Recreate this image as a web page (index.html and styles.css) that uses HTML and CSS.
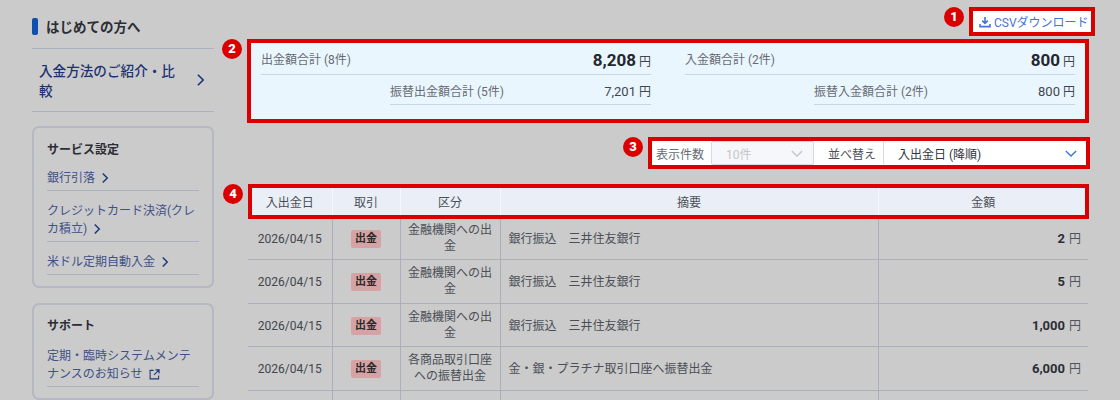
FILE: index.html
```html
<!DOCTYPE html>
<html lang="ja">
<head>
  <meta charset="UTF-8" />
  <title>入出金履歴</title>
  <link rel="stylesheet" href="styles.css">
</head>
<body>
  <div class="page">

    <!-- sidebar -->
    <aside class="side">
      <div class="side-head"><span class="marker"></span>はじめての方へ</div>
      <a class="side-main">
        <span>入金方法のご紹介・比較</span>
        <svg class="chev-lg" viewBox="0 0 10 16"><path d="M2 2l6 6-6 6"/></svg>
      </a>

      <div class="card first">
        <div class="card-title">サービス設定</div>
        <a class="card-link">銀行引落<svg class="chev" viewBox="0 0 10 16"><path d="M2 2l6 6-6 6"/></svg></a>
        <a class="card-link">クレジットカード決済(クレカ積立)<svg class="chev" viewBox="0 0 10 16"><path d="M2 2l6 6-6 6"/></svg></a>
        <a class="card-link">米ドル定期自動入金<svg class="chev" viewBox="0 0 10 16"><path d="M2 2l6 6-6 6"/></svg></a>
      </div>

      <div class="card">
        <div class="card-title">サポート</div>
        <a class="card-link">定期・臨時システムメンテナンスのお知らせ<svg class="ext" viewBox="0 0 12 12"><path d="M5 1.5H1.2v9.3h9.3V7M7 1h4v4M11 1L5.5 6.5"/></svg></a>
      </div>
    </aside>

    <main class="main">

      <!-- csv -->
      <div class="csv-row">
        <div class="spot csv">
          <span class="num">1</span>
          <svg class="dl" viewBox="0 0 12 12"><path d="M6 1v6M3.2 4.6L6 7.4l2.8-2.8M1 8v2.6h10V8"/></svg>
          CSVダウンロード
        </div>
      </div>

      <!-- totals -->
      <div class="spot totals">
        <span class="num">2</span>
        <div class="total-col">
          <div class="total-row">
            <span>出金額合計 (8件)</span>
            <span class="big">8,208<small>円</small></span>
          </div>
          <div class="total-row sub">
            <span>振替出金額合計 (5件)</span>
            <span class="val">7,201<small>円</small></span>
          </div>
        </div>
        <div class="total-col">
          <div class="total-row">
            <span>入金額合計 (2件)</span>
            <span class="big">800<small>円</small></span>
          </div>
          <div class="total-row sub">
            <span>振替入金額合計 (2件)</span>
            <span class="val">800<small>円</small></span>
          </div>
        </div>
      </div>

      <!-- controls -->
      <div class="ctrl-row">
        <div class="spot ctrl">
          <span class="num">3</span>
          <span class="ctrl-label">表示件数</span>
          <div class="sel off">10件<svg viewBox="0 0 14 8"><path d="M1 1l6 6 6-6"/></svg></div>
          <span class="ctrl-label dark">並べ替え</span>
          <div class="sel wide">入出金日 (降順)<svg viewBox="0 0 14 8"><path d="M1 1l6 6 6-6"/></svg></div>
        </div>
      </div>

      <!-- history -->
      <div class="table-wrap">
        <div class="spot head-frame"><span class="num">4</span></div>
        <table class="hist">
          <colgroup>
            <col class="c-date"><col class="c-kind"><col class="c-cat"><col class="c-memo"><col>
          </colgroup>
          <thead>
            <tr><th>入出金日</th><th>取引</th><th>区分</th><th>摘要</th><th>金額</th></tr>
          </thead>
          <tbody>
            <tr>
              <td class="ctr">2026/04/15</td>
              <td class="ctr"><span class="pill">出金</span></td>
              <td class="ctr cat">金融機関への出金</td>
              <td>銀行振込　三井住友銀行</td>
              <td class="amt"><b>2</b><small>円</small></td>
            </tr>
            <tr>
              <td class="ctr">2026/04/15</td>
              <td class="ctr"><span class="pill">出金</span></td>
              <td class="ctr cat">金融機関への出金</td>
              <td>銀行振込　三井住友銀行</td>
              <td class="amt"><b>5</b><small>円</small></td>
            </tr>
            <tr>
              <td class="ctr">2026/04/15</td>
              <td class="ctr"><span class="pill">出金</span></td>
              <td class="ctr cat">金融機関への出金</td>
              <td>銀行振込　三井住友銀行</td>
              <td class="amt"><b>1,000</b><small>円</small></td>
            </tr>
            <tr>
              <td class="ctr">2026/04/15</td>
              <td class="ctr"><span class="pill">出金</span></td>
              <td class="ctr cat">各商品取引口座への振替出金</td>
              <td>金・銀・プラチナ取引口座へ振替出金</td>
              <td class="amt"><b>6,000</b><small>円</small></td>
            </tr>
            <!-- next row starts at the fold, its text is below the window -->
            <tr><td></td><td></td><td></td><td></td><td></td></tr>
          </tbody>
        </table>
      </div>
    </main>
  </div>
</body>
</html>
```
FILE: styles.css
```css
*{box-sizing:border-box}
html,body{height:400px;overflow:hidden}
body{
  margin:0;
  font-family:Roboto,"Noto Sans CJK JP",sans-serif;
  font-size:12px;
  background:#cbcbcb;
  color:#3b3f46;
}
.page{display:flex;align-items:flex-start;padding:0 32px}

/* sidebar */
.side{width:182px;flex-shrink:0;margin-right:34px}
.side-head{
  display:flex;
  align-items:center;
  gap:8px;
  height:49px;
  padding-top:4px;
  font-size:13.5px;
  font-weight:700;
  color:#2b2e35;
  border-bottom:1.5px solid #acb2bf;
}
.marker{width:6px;height:17px;background:#0f4fb0;border-radius:2px}
.side-main{
  display:flex;
  align-items:center;
  justify-content:space-between;
  height:63px;
  padding:0 9px 0 7px;
  font-size:13.6px;
  line-height:20px;
  font-weight:500;
  color:#1d3272;
  border-bottom:1.5px solid #acb2bf;
}
.side-main span{width:146px;padding-top:2px}
.chev-lg{width:9px;height:14px;flex-shrink:0}
.chev-lg path,.chev path{fill:none;stroke:#1d3a7a;stroke-width:2}

.card{
  margin-top:15px;
  padding:12px 13px 11px;
  border:2px solid #b3b8c4;
  border-radius:7px;
}
.card.first{margin-top:14px}
.card + .card{padding-top:11px}
.card-title{
  font-size:12px;
  font-weight:700;
  line-height:20px;
  color:#2b2e35;
  margin-bottom:5px;
}
.card + .card .card-title{margin-bottom:7px}
.card-link{
  display:block;
  padding:4px 0 3px;
  line-height:18px;
  color:#3f5187;
  border-bottom:1.5px solid #acb2bf;
}
.card-link + .card-link{margin-top:7px}
.chev{width:8px;height:12px;margin-left:6px;vertical-align:-2px}
.ext{width:11px;height:11px;margin-left:6px;vertical-align:-2px}
.ext path{fill:none;stroke:#1d3a7a;stroke-width:1.2}

/* highlighted parts */
.main{width:840px;flex-shrink:0}
.spot{position:relative;border:4px solid #da0000}
.num{
  position:absolute;
  left:-29px;
  top:-4px;
  width:20px;
  height:20px;
  border-radius:50%;
  background:#da0000;
  color:#fff;
  font-size:13px;
  font-weight:900;
  line-height:20px;
  text-align:center;
}

.csv-row{display:flex;justify-content:flex-end;padding-top:7px;margin-right:-7px}
.csv{
  display:flex;
  align-items:center;
  width:126px;
  height:29px;
  padding-left:6px;
  background:#fff;
  font-size:12px;
  white-space:nowrap;
  color:#4673d6;
}
.dl{width:12px;height:12px;margin-right:3px;flex-shrink:0}
.dl path{fill:none;stroke:#4673d6;stroke-width:1.6}

.totals{
  display:flex;
  gap:34px;
  width:842px;
  height:84px;
  margin:3px 0 0 -1px;
  padding:0 10px;
  background:#eaf6fe;
  color:#666b73;
}
.total-col{flex:1}
.total-row{
  display:flex;
  align-items:center;
  justify-content:space-between;
  height:32px;
  border-bottom:1px solid #cbd5e3;
}
.total-row.sub{height:30px;margin-left:129px;padding-top:1px}
.big{font-size:17px;font-weight:700;color:#24272d;padding-top:3px}
.val{font-size:13px;color:#42464d}
.total-row small{font-size:12px;font-weight:400;color:#42464d;margin-left:3px}

.ctrl-row{display:flex;justify-content:flex-end;margin:14px -2px 0 0}
.ctrl{
  display:flex;
  align-items:center;
  width:442px;
  height:32px;
  background:#fff;
  padding-left:4px;
}
.ctrl-label{width:55px;flex-shrink:0;color:#666b73}
.ctrl-label.dark{color:#4b4f56;width:55px;margin-left:14px}
.sel{
  display:flex;
  align-items:center;
  justify-content:space-between;
  height:24px;
  border:1px solid #d5d9e1;
  border-radius:2px;
  padding:0 10px 0 14px;
  color:#30343b;
}
.sel svg{width:12px;height:7px}
.sel path{fill:none;stroke:#3f76d8;stroke-width:1.6}
.sel.off{width:103px;background:#f6f7fa;color:#c3c6cc}
.sel.off path{stroke:#c3c6cc}
.sel.wide{width:203px;border-width:0 0 0 1px;padding-right:9px}

/* table */
.table-wrap{position:relative;margin-top:15px}
.head-frame{position:absolute;left:0;right:-1px;top:0;height:35px}
.hist{width:840px;table-layout:fixed;border-collapse:collapse}
.c-date{width:84px}
.c-kind{width:68px}
.c-cat{width:100px}
.c-memo{width:378px}
.hist th{
  height:32px;
  padding:3px 0 0;
  font-weight:400;
  color:#4b4f56;
  background:#e9eef7;
  border-left:1px solid #f6f8fc;
}
.hist th:first-child{border-left:0}
.hist td{
  height:43.5px;
  padding:2px 8px 0;
  line-height:16px;
  color:#4a4e55;
  border-bottom:1px solid #aab0bd;
  border-left:1px solid #aab0bd;
}
.hist td:first-child{border-left:0}
.ctr{text-align:center}
.hist td:first-child{color:#42464d;padding:2px 0 0}
.hist td.cat{padding:0 7px}
.pill{
  display:inline-block;
  width:30px;
  height:18px;
  line-height:18px;
  font-size:11px;
  font-weight:700;
  color:#2b2b2b;
  background:#d6a3a5;
  border-radius:2px;
}
.hist td.amt{text-align:right;padding-right:7px}
.amt b{font-size:13px;color:#2b2e35}
.amt small{font-size:12px;margin-left:4px;color:#50545b}
```
